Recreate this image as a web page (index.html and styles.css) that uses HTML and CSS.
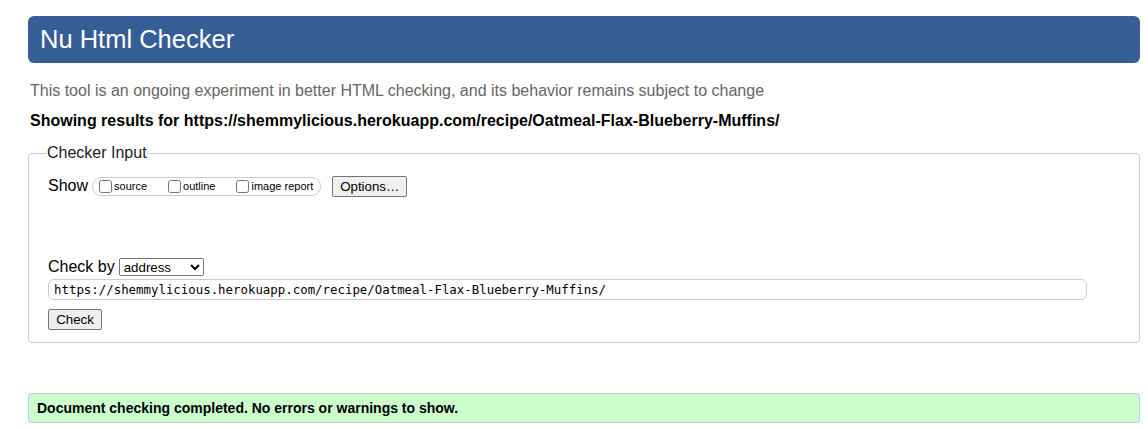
FILE: index.html
```html
<!DOCTYPE html>
<html>
<head>
<meta charset="utf-8">
<title>Nu Html Checker</title>
<link rel="stylesheet" href="styles.css">
</head>
<body>
<h1 class="title">Nu Html Checker</h1>
<p class="intro">This tool is an ongoing experiment in better HTML checking, and its behavior remains subject to change</p>
<p class="showing">Showing results for https://shemmylicious.herokuapp.com/recipe/Oatmeal-Flax-Blueberry-Muffins/</p>
<form class="checker">
  <fieldset class="panel">
    <legend class="legend">Checker Input</legend>
    <div class="show-row">
      <span class="label">Show</span>
      <span class="opts">
        <label class="opt"><input type="checkbox" class="cb">source</label>
        <label class="opt"><input type="checkbox" class="cb">outline</label>
        <label class="opt"><input type="checkbox" class="cb">image report</label>
      </span>
      <button type="button" class="btn options">Options…</button>
    </div>
    <div class="by-row">
      <span class="label">Check by</span>
      <select class="sel"><option>address</option></select>
    </div>
    <input class="url" type="text" value="https://shemmylicious.herokuapp.com/recipe/Oatmeal-Flax-Blueberry-Muffins/">
    <div class="submit-row"><button type="button" class="btn check">Check</button></div>
  </fieldset>
</form>
<p class="success">Document checking completed. No errors or warnings to show.</p>
</body>
</html>
```

FILE: styles.css
```css
html, body {
  margin: 0;
  background: #fff;
}
body {
  padding: 16px 8px 0 28px;
  font-family: "Liberation Sans", Arial, sans-serif;
  color: #000;
}
.title {
  margin: 0;
  height: 47px;
  box-sizing: border-box;
  padding: 0 12px;
  background: #365d95;
  border-radius: 6px;
  color: #fff;
  font-weight: normal;
  font-size: 25.5px;
  line-height: 47px;
}
.intro {
  margin: 18px 0 0 2px;
  font-size: 16px;
  line-height: 20px;
  color: #666;
}
.showing {
  margin: 10px 0 0 2px;
  font-size: 16px;
  line-height: 20px;
  font-weight: bold;
}
.checker {
  margin: 13px 0 0 0;
}
.panel {
  margin: 0;
  padding: 13px 19px 12px 19px;
  border: 1px solid #ccc;
  border-radius: 4px;
  min-width: 0;
}
.legend {
  padding: 0 1px;
  margin-left: -2px;
  font-size: 16px;
  color: #222;
}
.show-row {
  display: flex;
  align-items: center;
  height: 22px;
}
.label {
  font-size: 16px;
  margin-right: 4px;
}
.opts {
  display: inline-flex;
  align-items: center;
  height: 19px;
  box-sizing: border-box;
  border: 1px solid #ccc;
  border-radius: 9px;
  padding: 0 7px 0 6px;
  font-size: 11px;
}
.opt {
  display: inline-flex;
  align-items: center;
  margin-right: 21px;
}
.opt:last-child {
  margin-right: 0;
}
.cb {
  margin: 0 2px 0 0;
  width: 13px;
  height: 13px;
}
.btn {
  font-family: "Liberation Sans", Arial, sans-serif;
  font-size: 13.3px;
  padding: 1px 6px;
  border: 1px solid #767676;
  border-radius: 2px;
  background: #efefef;
  color: #000;
}
.options {
  margin-left: 11px;
  height: 21px;
  width: 75px;
}
.by-row {
  display: flex;
  align-items: center;
  margin-top: 61px;
  height: 18px;
}
.sel {
  font-family: "Liberation Sans", Arial, sans-serif;
  font-size: 13.3px;
  height: 18px;
  width: 85px;
  margin-left: 0;
  padding: 0;
}
.url {
  display: block;
  box-sizing: border-box;
  margin-top: 3px;
  width: 1039px;
  height: 21px;
  padding: 0 5px;
  border: 1px solid #ccc;
  border-radius: 6px;
  font-family: "DejaVu Sans Mono", "Liberation Mono", monospace;
  font-size: 12.4px;
  color: #000;
}
.submit-row {
  margin-top: 9px;
  height: 21px;
}
.check {
  width: 54px;
  height: 21px;
}
.success {
  margin: 50px 0 0 0;
  height: 30px;
  box-sizing: border-box;
  padding: 0 8px;
  background: #ccffcc;
  border: 1px solid #ccc;
  border-radius: 3px;
  font-size: 14px;
  font-weight: bold;
  line-height: 28px;
}
```
